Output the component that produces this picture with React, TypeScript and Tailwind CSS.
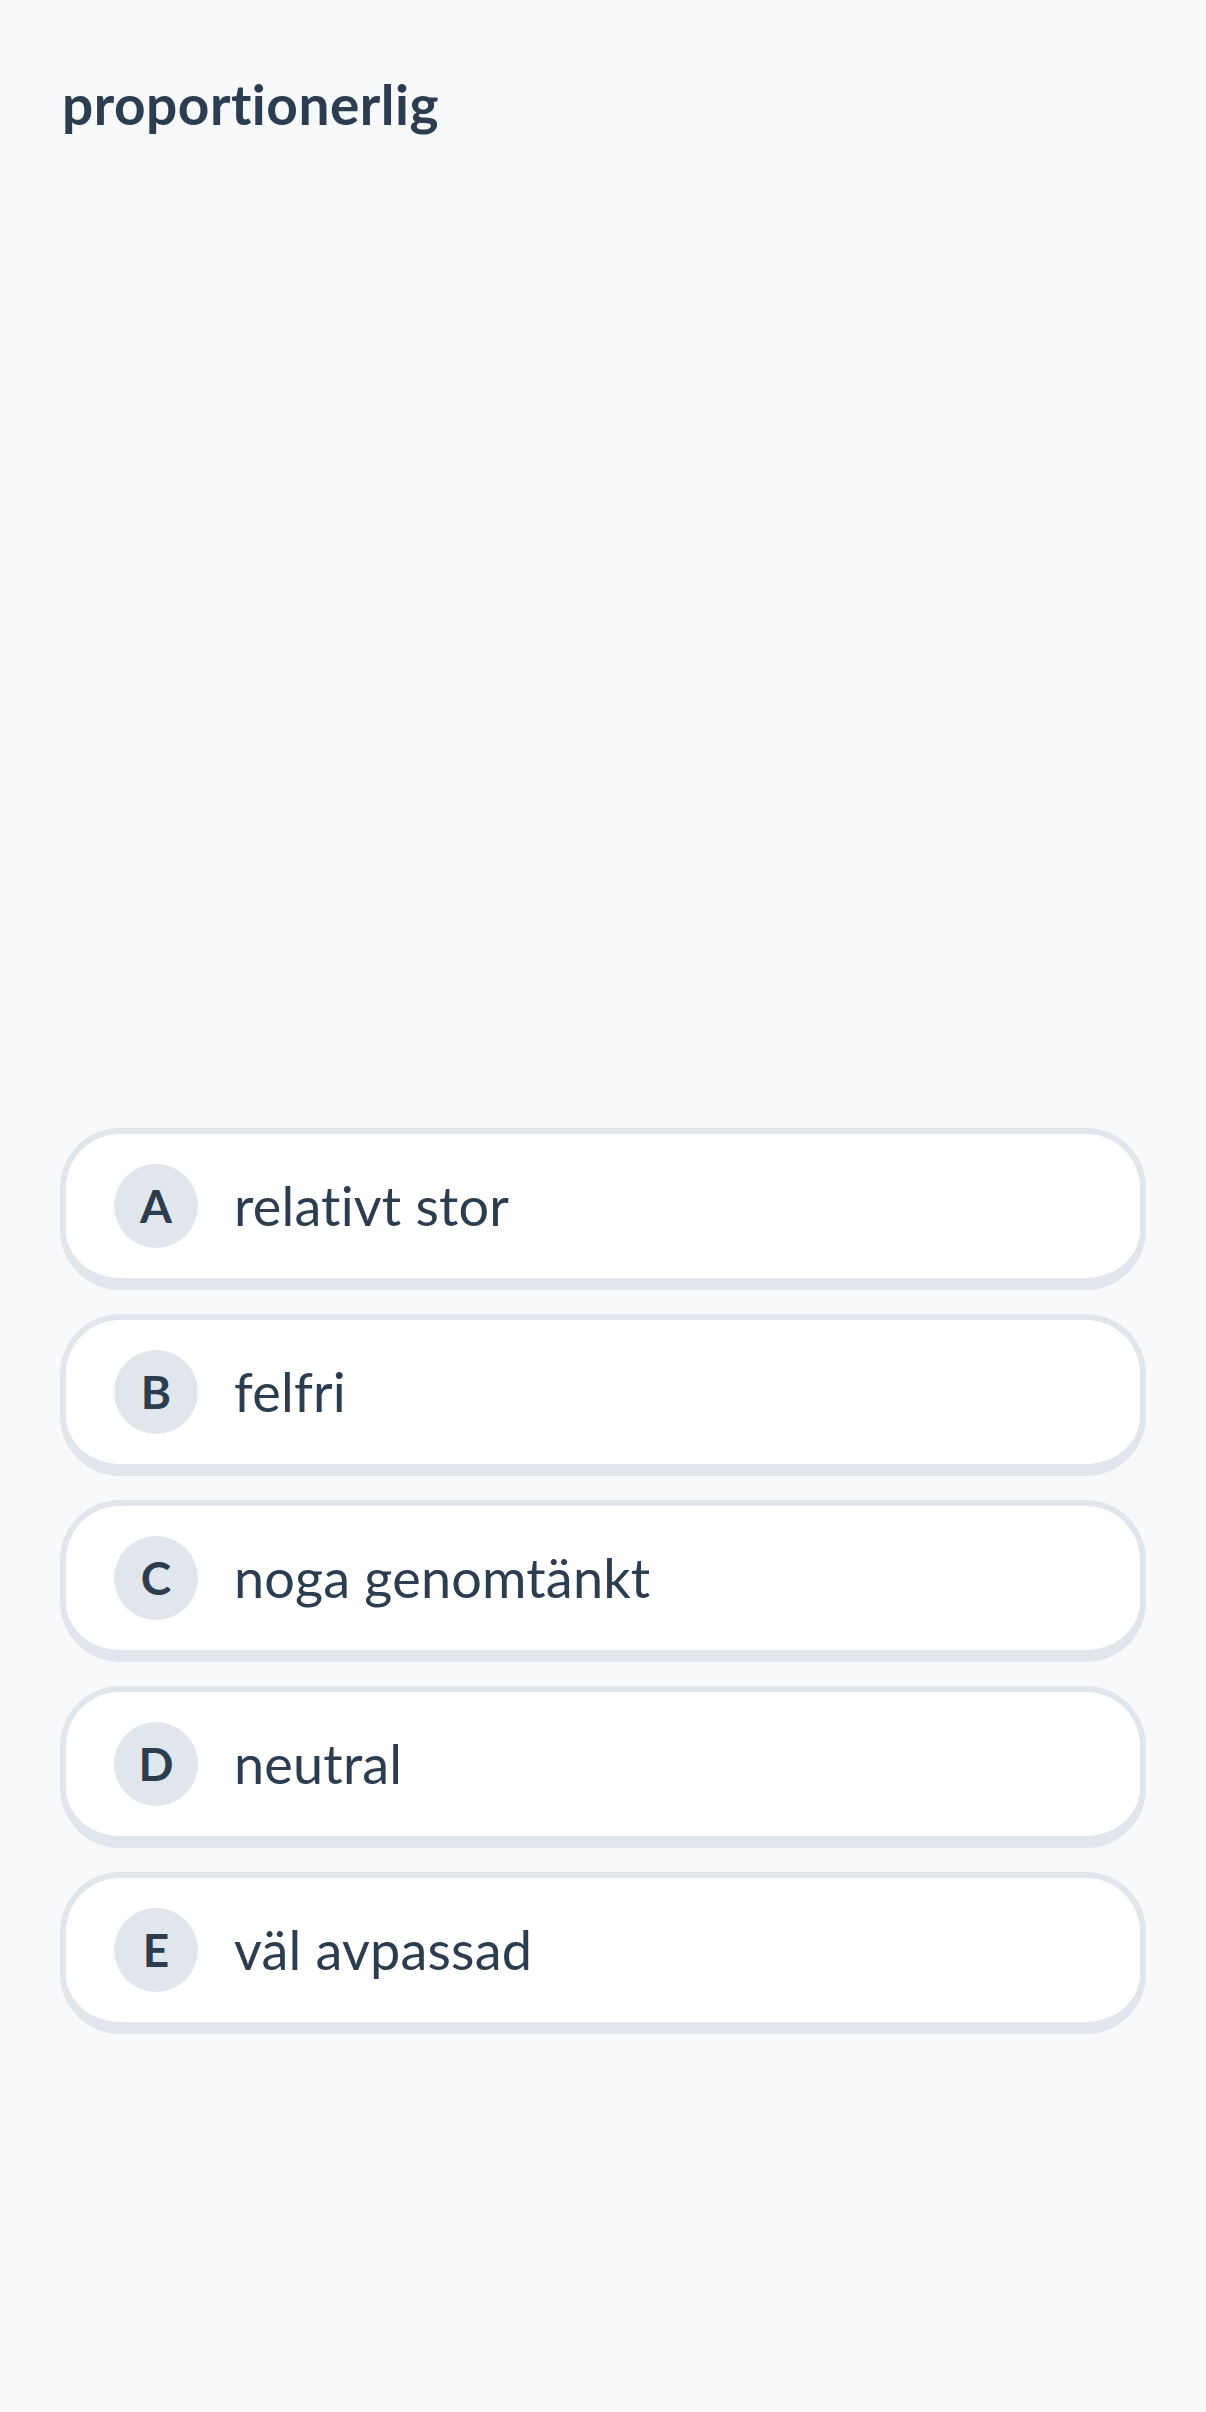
import React from "react";

const options = [
  { letter: "A", text: "relativt stor" },
  { letter: "B", text: "felfri" },
  { letter: "C", text: "noga genomtänkt" },
  { letter: "D", text: "neutral" },
  { letter: "E", text: "väl avpassad" },
];

export default function App() {
  return (
    <div
      className="min-h-[2412px] w-full bg-[#f8f9fb] px-[60px] pt-[68px] text-[#2c3d50] [font-variant-ligatures:none]"
      style={{ fontFamily: "Lato, 'Open Sans', sans-serif" }}
    >
      <h1 className="text-[55px] font-bold leading-[72px] pl-[2px] tracking-[0.5px]">proportionerlig</h1>
      <div className="mt-[988px] flex flex-col gap-[24px]">
        {options.map((o) => (
          <button
            key={o.letter}
            className="flex h-[162px] w-full items-center gap-[36px] rounded-[60px] border-[6px] border-b-[12px] border-[#e1e6ed] bg-white pl-[48px] text-left"
          >
            <span className="flex h-[84px] w-[84px] shrink-0 items-center justify-center rounded-full bg-[#e1e6ed] text-[46px] font-bold leading-none">
              {o.letter}
            </span>
            <span className="text-[54px] leading-[64px] tracking-[0.2px]">{o.text}</span>
          </button>
        ))}
      </div>
    </div>
  );
}
